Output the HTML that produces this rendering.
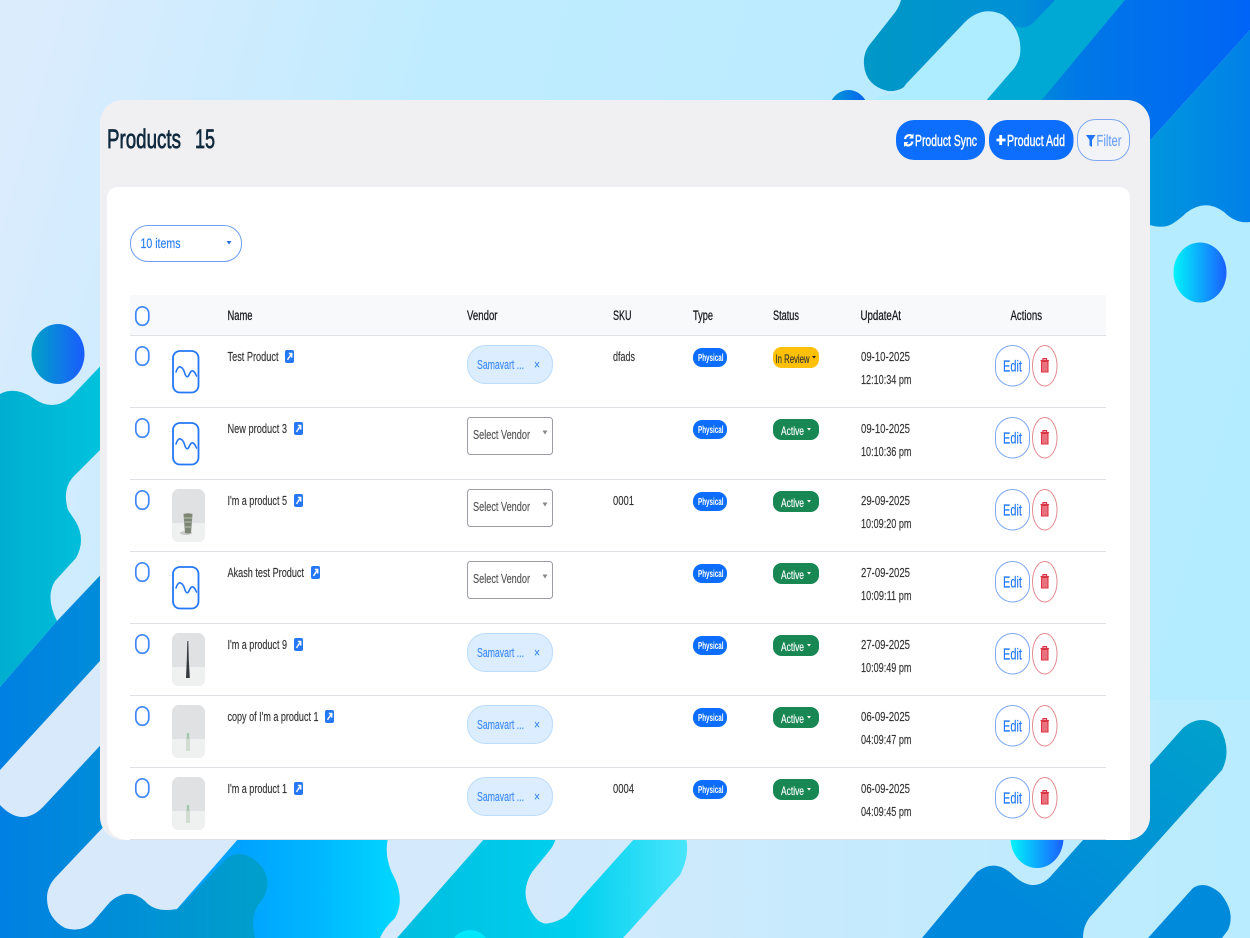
<!DOCTYPE html>
<html lang="en"><head><meta charset="utf-8"><title>Products</title>
<style>
html,body{margin:0;padding:0;width:1250px;height:938px;overflow:hidden;background:#c8ecff}
svg{display:block;filter:blur(.35px)}
text{font-family:"Liberation Sans",sans-serif;font-size:13px;fill:#333;stroke:#333;stroke-width:.15}
.h{font-size:13.5px;fill:#16191c;stroke:#16191c;stroke-width:.25}
.v{fill:#3d8bf8;stroke:#3d8bf8}
.s{fill:#555;stroke:#555}
.e{fill:#1f78f8;stroke:#1f78f8;font-size:15.5px}
.p{fill:#fff;stroke:#fff;font-size:10.5px;font-weight:bold;stroke-width:0}
.a{fill:#fff;stroke:#fff;font-size:12px}
.t{fill:#10293c;stroke:#10293c;font-size:27px;stroke-width:.7}
.b{fill:#fff;stroke:#fff;font-size:15.5px;stroke-width:.4}
</style></head><body>
<svg width="1250" height="938" viewBox="0 0 1250 938" xmlns="http://www.w3.org/2000/svg">
<defs>
<linearGradient id="bg" gradientUnits="userSpaceOnUse" x1="0" y1="150" x2="1250" y2="500"><stop offset="0" stop-color="#dbecfd"/><stop offset=".3" stop-color="#c0ecff"/><stop offset=".5" stop-color="#bdebff"/><stop offset="1" stop-color="#b4ecff"/></linearGradient>
<linearGradient id="bg2" gradientUnits="userSpaceOnUse" x1="0" y1="840" x2="1250" y2="840"><stop offset="0" stop-color="#d8e9fd"/><stop offset=".4" stop-color="#d3e9fc"/><stop offset="1" stop-color="#b8ecfe"/></linearGradient>
<linearGradient id="A" gradientUnits="userSpaceOnUse" x1="865" y1="0" x2="1250" y2="0"><stop offset="0" stop-color="#0098c6"/><stop offset=".4" stop-color="#0090d6"/><stop offset=".55" stop-color="#0078e6"/><stop offset="1" stop-color="#0064f6"/></linearGradient>
<linearGradient id="B" gradientUnits="userSpaceOnUse" x1="1150" y1="0" x2="1250" y2="0"><stop offset="0" stop-color="#0096de"/><stop offset="1" stop-color="#0080e8"/></linearGradient>
<linearGradient id="c1" x1="0" x2="1" y1="0" y2="0"><stop offset="0" stop-color="#00f4fa"/><stop offset="1" stop-color="#1a60ff"/></linearGradient>
<linearGradient id="c2" x1="0" x2="1" y1="0" y2="0"><stop offset="0" stop-color="#00a2c6"/><stop offset="1" stop-color="#1a5cff"/></linearGradient>
<linearGradient id="c3" x1="0" x2="1" y1="0" y2="0"><stop offset="0" stop-color="#00a0d0"/><stop offset="1" stop-color="#0a5cf5"/></linearGradient>
<linearGradient id="T" gradientUnits="userSpaceOnUse" x1="0" y1="0" x2="100" y2="0"><stop offset="0" stop-color="#00aed0"/><stop offset="1" stop-color="#00c2dc"/></linearGradient>
<linearGradient id="D" gradientUnits="userSpaceOnUse" x1="0" y1="0" x2="260" y2="0"><stop offset="0" stop-color="#0080e2"/><stop offset="1" stop-color="#009fcb"/></linearGradient>
<linearGradient id="K" gradientUnits="userSpaceOnUse" x1="240" y1="0" x2="400" y2="0"><stop offset="0" stop-color="#00a2ff"/><stop offset=".5" stop-color="#00b8ff"/><stop offset="1" stop-color="#00d8ff"/></linearGradient>
<linearGradient id="M" gradientUnits="userSpaceOnUse" x1="400" y1="0" x2="690" y2="0"><stop offset="0" stop-color="#00bee0"/><stop offset=".6" stop-color="#00d0ee"/><stop offset="1" stop-color="#4ae6fc"/></linearGradient>
<linearGradient id="R" gradientUnits="userSpaceOnUse" x1="1200" y1="720" x2="1050" y2="938"><stop offset="0" stop-color="#00a0cc"/><stop offset="1" stop-color="#0088dc"/></linearGradient>

<symbol id="chk" overflow="visible"><rect x="0.8" y="0.8" width="13" height="18.5" rx="6.5" ry="7" fill="#fff" stroke="#3f87f8" stroke-width="1.7"/></symbol>
<symbol id="ph" overflow="visible"><rect x="1" y="15" width="25.5" height="41.5" rx="7" fill="#fff" stroke="#2478f8" stroke-width="1.8"/><path d="M4 36 Q6 30 8.500 31 Q11.500 32 13 38 Q15 43 17 39 Q19 34 21 35 Q23 36 24.500 40" fill="none" stroke="#2478f8" stroke-width="1.6" stroke-linecap="round"/></symbol>
<symbol id="lk" overflow="visible"><rect x="0" y="0" width="9" height="13" rx="2" fill="#2478f8"/><path d="M2.500 9.800 L6.300 4.200 M3.800 3.500 H6.700 V7.500" fill="none" stroke="#fff" stroke-width="1.500"/></symbol>
<symbol id="vp" overflow="visible"><rect x="467.500" y="9.500" width="85" height="38" rx="18" fill="#dcedff" stroke="#bddcfb"/></symbol>
<symbol id="vs" overflow="visible"><rect x="467.500" y="9.500" width="85" height="37" rx="3" fill="#fff" stroke="#9a9ea2"/><path d="M542.500 22.500 h5 l-2.500 4 z" fill="#888"/></symbol>
<symbol id="ty" overflow="visible"><rect x="693" y="12" width="34" height="19" rx="9" fill="#0d6efd"/></symbol>
<symbol id="ac" overflow="visible"><rect x="773" y="11" width="46" height="21" rx="8.500" fill="#198754"/><path d="M807 20 h4 l-2 2.500 z" fill="#fff"/></symbol>
<symbol id="btn" overflow="visible"><rect x="995.500" y="9.500" width="34" height="40.500" rx="17" ry="17" fill="#fff" stroke="#7ea8f5"/><rect x="1032.500" y="9.500" width="24.500" height="40.500" rx="12.200" ry="20" fill="#fff" stroke="#e58a92"/><path d="M1040.500 24.500 h8.500 M1043 24 v-1.400 h3.500 v1.400" fill="none" stroke="#dc3545" stroke-width="1.200"/><path d="M1041.500 25.500 h6.500 v10.500 h-6.500 z" fill="#e8727e" stroke="#dc3545" stroke-width="1.100"/></symbol>
</defs>

<!-- background -->
<rect width="1250" height="938" fill="url(#bg)"/>
<rect y="700" width="1250" height="238" fill="url(#bg2)"/>
<path d="M901 0 Q899 8 893 15 L871 43 Q863 52 864 65 Q866 86 888 91 Q901 92 910 82 L1000 102 L1145 146 L1250 30 L1250 0 Z" fill="url(#A)"/>
<path d="M1055 0 L1125 0 L1040 102 L985 102 L1010 73 L1016 26 Q1025 30 1033 23 Z" fill="#00a8d4"/>
<path d="M906 84 L965 22 Q983 5 1003 15 Q1023 30 1020 55 Q1018 65 1010 73 L985 102 L870 102 L880 96 Q899 96 906 84 Z" fill="#aeecff"/>
<path d="M1250 30 L1145 146 L1145 225 L1150 225 Q1163 229 1172 224 Q1180 219 1186 213 Q1205 198 1224 212 Q1236 224 1250 222 Z" fill="url(#B)"/>
<ellipse cx="848.500" cy="118" rx="22" ry="28" fill="url(#c3)"/>
<ellipse cx="1200" cy="272.500" rx="26.500" ry="30" fill="url(#c1)"/>
<ellipse cx="58" cy="354" rx="26.500" ry="30" fill="url(#c2)"/>
<!-- left -->
<path d="M0 394 Q15 386 33 398 Q52 412 70 398 L110 356 L110 440 L73 477 Q62 490 68 510 Q72 516 76 522 Q86 540 76 558 L55 581 Q45 597 57 621 L0 687 Z" fill="url(#T)"/>
<path d="M0 687 L57 621 L110 565 L240 840 L240 938 L0 938 Z" fill="url(#D)"/>
<path d="M110 650 L0 770 L0 805 Q22 828 43 807 L110 735 Z" fill="#d8e9fc"/>
<!-- bottom -->
<path d="M237 838 L388 838 Q384 855 392 873 Q406 898 395 918 Q384 928 380 938 L150 938 L177 910 Z" fill="url(#K)"/>
<path d="M177 910 L227 858 Q238 850 252 858 Q270 870 267 888 Q265 898 258 905 Q250 918 255 938 L150 938 Z" fill="url(#D)"/>
<path d="M110 820 L55 878 Q47 887 47 898 Q47 918 65 928 Q80 933 92 923 L110 902 Q128 886 145 901 Q155 913 177 909 L239 838 L239 825 Z" fill="#d8e9fc"/>
<path d="M397 938 L485 838 L556 838 Q554 845 550 850 L532 872 Q519 893 532 913 Q540 926 550 923 Q560 921 567 915 L582 897 L635 838 L686 838 Q690 855 680 875 L623 938 Z" fill="url(#M)"/>
<ellipse cx="470" cy="948" rx="19" ry="18" fill="#00e8fa"/>
<ellipse cx="1037" cy="838" rx="26.500" ry="30" fill="url(#c1)"/>
<path d="M922 938 L977 872 Q995 858 1013 875 Q1033 894 1050 877 L1083 840 L1150 765 L1183 728 Q1202 712 1220 728 Q1232 750 1222 770 L1090 917 Q1083 926 1083 938 Z" fill="url(#R)"/>
<path d="M1148 938 L1193 888 Q1205 880 1220 893 Q1236 912 1228 930 L1222 938 Z" fill="#008adc"/>

<!-- card -->
<rect x="100" y="100" width="1050" height="740" rx="23" fill="#f0f0f3"/>
<path d="M119 187 H1118 Q1130 187 1130 199 V840 H130 Q107 840 107 817 V199 Q107 187 119 187 Z" fill="#fff"/>

<!-- header -->
<text class="t" x="107" y="148" textLength="74" lengthAdjust="spacingAndGlyphs">Products</text>
<text class="t" x="195" y="148" textLength="20" lengthAdjust="spacingAndGlyphs">15</text>
<rect x="896" y="120" width="89" height="40" rx="18" fill="#0d6efd"/>
<path d="M905 139 A4.500 5 0 0 1 912.500 136.500 M912.500 141.500 A4.500 5 0 0 1 905 144" fill="none" stroke="#fff" stroke-width="2.200"/><path d="M913.500 133.500 v5 h-4.500 z M904 147 v-5 h4.500 z" fill="#fff"/>
<text class="b" x="915" y="146" textLength="62" lengthAdjust="spacingAndGlyphs">Product Sync</text>
<rect x="989" y="120" width="84.500" height="40" rx="18" fill="#0d6efd"/>
<path d="M1000.700 135 v10 M996.500 140 h9" stroke="#fff" stroke-width="2.800" fill="none"/>
<text class="b" x="1007" y="146" textLength="58" lengthAdjust="spacingAndGlyphs">Product Add</text>
<rect x="1077.500" y="119.500" width="52" height="41" rx="18" fill="#f3f4f8" stroke="#7ea8f5"/>
<path d="M1086 135 h9.500 l-3.500 5 v7 l-2.500 -1.500 v-5.500 z" fill="#1f75f6"/>
<text x="1096.500" y="146" textLength="25" lengthAdjust="spacingAndGlyphs" style="font-size:16px;fill:#6ea3f5;stroke:#6ea3f5">Filter</text>

<!-- select -->
<rect x="130.500" y="225.500" width="111" height="36" rx="17.500" fill="#fff" stroke="#6f9ff5"/>
<text x="140.500" y="248" textLength="40" lengthAdjust="spacingAndGlyphs" style="font-size:14px;fill:#2a7df6;stroke:#2a7df6">10 items</text>
<path d="M226.500 241 h5 l-2.500 3.500 z" fill="#2a6fd6"/>

<!-- table head -->
<rect x="130" y="295" width="976" height="40" fill="#f8f9fb"/>
<rect x="130" y="335" width="976" height="1" fill="#dee2e6"/>
<use href="#chk" x="135" y="306"/>
<text class="h" x="227.500" y="320" textLength="25" lengthAdjust="spacingAndGlyphs">Name</text>
<text class="h" x="467" y="320" textLength="30.500" lengthAdjust="spacingAndGlyphs">Vendor</text>
<text class="h" x="613" y="320" textLength="18.500" lengthAdjust="spacingAndGlyphs">SKU</text>
<text class="h" x="693" y="320" textLength="20" lengthAdjust="spacingAndGlyphs">Type</text>
<text class="h" x="773" y="320" textLength="26" lengthAdjust="spacingAndGlyphs">Status</text>
<text class="h" x="860.500" y="320" textLength="40.500" lengthAdjust="spacingAndGlyphs">UpdateAt</text>
<text class="h" x="1010.500" y="320" textLength="31.500" lengthAdjust="spacingAndGlyphs">Actions</text>

<!-- row 1 -->
<g transform="translate(0,336)">
<rect x="130" y="71" width="976" height="1" fill="#dee2e6"/>
<use href="#chk" x="135" y="10"/><use href="#ph" x="172" y="0"/>
<text x="227.500" y="25" textLength="51" lengthAdjust="spacingAndGlyphs">Test Product</text><use href="#lk" x="285" y="14"/>
<use href="#vp" x="0" y="0"/><text class="v" x="477" y="33" textLength="47" lengthAdjust="spacingAndGlyphs">Samavart ...</text><text class="v" x="534" y="33" textLength="6" lengthAdjust="spacingAndGlyphs">×</text>
<text x="613" y="25" textLength="22" lengthAdjust="spacingAndGlyphs">dfads</text>
<use href="#ty" x="0" y="0"/><text class="p" x="698" y="25" textLength="25.500" lengthAdjust="spacingAndGlyphs">Physical</text>
<rect x="773" y="11" width="46" height="21" rx="8.500" fill="#ffc107"/><path d="M812 20 h4 l-2 2.500 z" fill="#222"/>
<text x="775.500" y="27" textLength="34" lengthAdjust="spacingAndGlyphs" style="font-size:12px">In Review</text>
<text x="861" y="25" textLength="49" lengthAdjust="spacingAndGlyphs">09-10-2025</text><text x="861" y="48" textLength="50.500" lengthAdjust="spacingAndGlyphs">12:10:34 pm</text>
<use href="#btn" x="0" y="0"/><text class="e" x="1003" y="35.500" textLength="19" lengthAdjust="spacingAndGlyphs">Edit</text>
</g>
<!-- row 2 -->
<g transform="translate(0,408)">
<rect x="130" y="71" width="976" height="1" fill="#dee2e6"/>
<use href="#chk" x="135" y="10"/><use href="#ph" x="172" y="0"/>
<text x="227.500" y="25" textLength="59.500" lengthAdjust="spacingAndGlyphs">New product 3</text><use href="#lk" x="294" y="14"/>
<use href="#vs" x="0" y="0"/><text class="s" x="473" y="31" textLength="57" lengthAdjust="spacingAndGlyphs">Select Vendor</text>
<use href="#ty" x="0" y="0"/><text class="p" x="698" y="25" textLength="25.500" lengthAdjust="spacingAndGlyphs">Physical</text>
<use href="#ac" x="0" y="0"/><text class="a" x="781" y="27" textLength="23" lengthAdjust="spacingAndGlyphs">Active</text>
<text x="861" y="25" textLength="49" lengthAdjust="spacingAndGlyphs">09-10-2025</text><text x="861" y="48" textLength="50.500" lengthAdjust="spacingAndGlyphs">10:10:36 pm</text>
<use href="#btn" x="0" y="0"/><text class="e" x="1003" y="35.500" textLength="19" lengthAdjust="spacingAndGlyphs">Edit</text>
</g>
<!-- row 3 -->
<g transform="translate(0,480)">
<rect x="130" y="71" width="976" height="1" fill="#dee2e6"/>
<use href="#chk" x="135" y="10"/>
<rect x="172" y="9" width="33" height="53" rx="7" fill="#e0e1e3"/><path d="M172 43 H205 V55 Q205 62 198 62 H179 Q172 62 172 55 Z" fill="#eff0f0"/>
<ellipse cx="186" cy="53" rx="6" ry="2" fill="#c9c9c6"/><path d="M183.500 34 Q188 32.500 192.500 34 L191 53 Q188 54 185 53 Z" fill="#7d8674"/><path d="M184 38 H192 M184.500 42 H191.500 M185 47 H191" stroke="#b8c2ae" stroke-width="1"/>
<text x="227.500" y="25" textLength="59.500" lengthAdjust="spacingAndGlyphs">I'm a product 5</text><use href="#lk" x="294" y="14"/>
<use href="#vs" x="0" y="0"/><text class="s" x="473" y="31" textLength="57" lengthAdjust="spacingAndGlyphs">Select Vendor</text>
<text x="613" y="25" textLength="21" lengthAdjust="spacingAndGlyphs">0001</text>
<use href="#ty" x="0" y="0"/><text class="p" x="698" y="25" textLength="25.500" lengthAdjust="spacingAndGlyphs">Physical</text>
<use href="#ac" x="0" y="0"/><text class="a" x="781" y="27" textLength="23" lengthAdjust="spacingAndGlyphs">Active</text>
<text x="861" y="25" textLength="49" lengthAdjust="spacingAndGlyphs">29-09-2025</text><text x="861" y="48" textLength="50.500" lengthAdjust="spacingAndGlyphs">10:09:20 pm</text>
<use href="#btn" x="0" y="0"/><text class="e" x="1003" y="35.500" textLength="19" lengthAdjust="spacingAndGlyphs">Edit</text>
</g>
<!-- row 4 -->
<g transform="translate(0,552)">
<rect x="130" y="71" width="976" height="1" fill="#dee2e6"/>
<use href="#chk" x="135" y="10"/><use href="#ph" x="172" y="0"/>
<text x="227.500" y="25" textLength="76.500" lengthAdjust="spacingAndGlyphs">Akash test Product</text><use href="#lk" x="311" y="14"/>
<use href="#vs" x="0" y="0"/><text class="s" x="473" y="31" textLength="57" lengthAdjust="spacingAndGlyphs">Select Vendor</text>
<use href="#ty" x="0" y="0"/><text class="p" x="698" y="25" textLength="25.500" lengthAdjust="spacingAndGlyphs">Physical</text>
<use href="#ac" x="0" y="0"/><text class="a" x="781" y="27" textLength="23" lengthAdjust="spacingAndGlyphs">Active</text>
<text x="861" y="25" textLength="49" lengthAdjust="spacingAndGlyphs">27-09-2025</text><text x="861" y="48" textLength="50.500" lengthAdjust="spacingAndGlyphs">10:09:11 pm</text>
<use href="#btn" x="0" y="0"/><text class="e" x="1003" y="35.500" textLength="19" lengthAdjust="spacingAndGlyphs">Edit</text>
</g>
<!-- row 5 -->
<g transform="translate(0,624)">
<rect x="130" y="71" width="976" height="1" fill="#dee2e6"/>
<use href="#chk" x="135" y="10"/>
<rect x="172" y="9" width="33" height="53" rx="7" fill="#e0e1e3"/><path d="M172 43 H205 V55 Q205 62 198 62 H179 Q172 62 172 55 Z" fill="#eff0f0"/>
<path d="M187.300 17 H188.300 L188.800 36 L189.800 54 H186 L186.800 36 Z" fill="#353a3f"/>
<text x="227.500" y="25" textLength="59.500" lengthAdjust="spacingAndGlyphs">I'm a product 9</text><use href="#lk" x="294" y="14"/>
<use href="#vp" x="0" y="0"/><text class="v" x="477" y="33" textLength="47" lengthAdjust="spacingAndGlyphs">Samavart ...</text><text class="v" x="534" y="33" textLength="6" lengthAdjust="spacingAndGlyphs">×</text>
<use href="#ty" x="0" y="0"/><text class="p" x="698" y="25" textLength="25.500" lengthAdjust="spacingAndGlyphs">Physical</text>
<use href="#ac" x="0" y="0"/><text class="a" x="781" y="27" textLength="23" lengthAdjust="spacingAndGlyphs">Active</text>
<text x="861" y="25" textLength="49" lengthAdjust="spacingAndGlyphs">27-09-2025</text><text x="861" y="48" textLength="50.500" lengthAdjust="spacingAndGlyphs">10:09:49 pm</text>
<use href="#btn" x="0" y="0"/><text class="e" x="1003" y="35.500" textLength="19" lengthAdjust="spacingAndGlyphs">Edit</text>
</g>
<!-- row 6 -->
<g transform="translate(0,696)">
<rect x="130" y="71" width="976" height="1" fill="#dee2e6"/>
<use href="#chk" x="135" y="10"/>
<rect x="172" y="9" width="33" height="53" rx="7" fill="#e0e1e3"/><path d="M172 43 H205 V55 Q205 62 198 62 H179 Q172 62 172 55 Z" fill="#eff0f0"/>
<path d="M186 38 H190 V55 H186 Z" fill="#d2ddd2"/><path d="M187 37 H189 V43 H187 Z" fill="#a2c4b2"/>
<text x="227.500" y="25" textLength="91" lengthAdjust="spacingAndGlyphs">copy of I'm a product 1</text><use href="#lk" x="325" y="14"/>
<use href="#vp" x="0" y="0"/><text class="v" x="477" y="33" textLength="47" lengthAdjust="spacingAndGlyphs">Samavart ...</text><text class="v" x="534" y="33" textLength="6" lengthAdjust="spacingAndGlyphs">×</text>
<use href="#ty" x="0" y="0"/><text class="p" x="698" y="25" textLength="25.500" lengthAdjust="spacingAndGlyphs">Physical</text>
<use href="#ac" x="0" y="0"/><text class="a" x="781" y="27" textLength="23" lengthAdjust="spacingAndGlyphs">Active</text>
<text x="861" y="25" textLength="49" lengthAdjust="spacingAndGlyphs">06-09-2025</text><text x="861" y="48" textLength="50.500" lengthAdjust="spacingAndGlyphs">04:09:47 pm</text>
<use href="#btn" x="0" y="0"/><text class="e" x="1003" y="35.500" textLength="19" lengthAdjust="spacingAndGlyphs">Edit</text>
</g>
<!-- row 7 -->
<g transform="translate(0,768)">
<rect x="130" y="71" width="976" height="1" fill="#dee2e6"/>
<use href="#chk" x="135" y="10"/>
<rect x="172" y="9" width="33" height="53" rx="7" fill="#e0e1e3"/><path d="M172 43 H205 V55 Q205 62 198 62 H179 Q172 62 172 55 Z" fill="#eff0f0"/>
<path d="M186 38 H190 V55 H186 Z" fill="#d2ddd2"/><path d="M187 37 H189 V43 H187 Z" fill="#a2c4b2"/>
<text x="227.500" y="25" textLength="59.500" lengthAdjust="spacingAndGlyphs">I'm a product 1</text><use href="#lk" x="294" y="14"/>
<use href="#vp" x="0" y="0"/><text class="v" x="477" y="33" textLength="47" lengthAdjust="spacingAndGlyphs">Samavart ...</text><text class="v" x="534" y="33" textLength="6" lengthAdjust="spacingAndGlyphs">×</text>
<text x="613" y="25" textLength="21" lengthAdjust="spacingAndGlyphs">0004</text>
<use href="#ty" x="0" y="0"/><text class="p" x="698" y="25" textLength="25.500" lengthAdjust="spacingAndGlyphs">Physical</text>
<use href="#ac" x="0" y="0"/><text class="a" x="781" y="27" textLength="23" lengthAdjust="spacingAndGlyphs">Active</text>
<text x="861" y="25" textLength="49" lengthAdjust="spacingAndGlyphs">06-09-2025</text><text x="861" y="48" textLength="50.500" lengthAdjust="spacingAndGlyphs">04:09:45 pm</text>
<use href="#btn" x="0" y="0"/><text class="e" x="1003" y="35.500" textLength="19" lengthAdjust="spacingAndGlyphs">Edit</text>
</g>
</svg>
</body></html>
